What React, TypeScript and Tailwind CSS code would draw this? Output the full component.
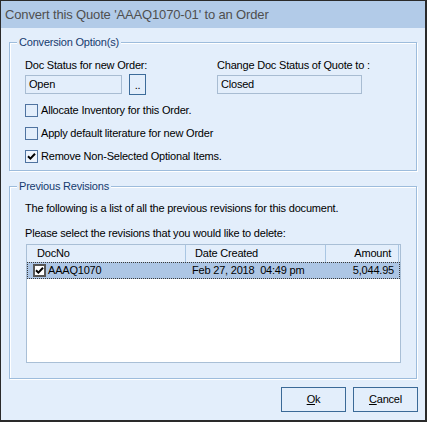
import React from "react";

const bg = "bg-[#e3eefb]";

function Check({ checked, dark }: { checked?: boolean; dark?: boolean }) {
  return (
    <div
      className={`flex h-[13px] w-[13px] shrink-0 items-center justify-center ${
        dark ? "border-2 border-[#555] bg-white" : checked ? "border border-[#4f73a0] bg-[#eef4fd]" : "border border-[#4f73a0]"
      }`}
    >
      {checked && (
        <svg width="9" height="9" viewBox="0 0 9 9">
          <path d="M1 4.2 L3.4 6.6 L8 1.8" fill="none" stroke="#000" strokeWidth="2" />
        </svg>
      )}
    </div>
  );
}

function Group({ title, className, children }: { title: string; className: string; children: React.ReactNode }) {
  return (
    <div className={`relative border border-[#9dbcdc] shadow-[1px_1px_0_#fff,inset_1px_1px_0_#fff] ${className}`}>
      <span className={`absolute -top-[7px] left-[7px] px-[2px] leading-[13px] text-[#163b6e] ${bg}`}>{title}</span>
      {children}
    </div>
  );
}

export default function App() {
  const options = [
    { label: "Allocate Inventory for this Order.", checked: false },
    { label: "Apply default literature for new Order", checked: false },
    { label: "Remove Non-Selected Optional Items.", checked: true },
  ];

  return (
    <div className="flex h-[422px] w-[427px] flex-col border-l border-t border-r-2 border-b-2 border-[#2a2a2a] font-['Liberation_Sans',Arial,sans-serif] text-[11px] tracking-[-0.2px] text-black">
      {/* title bar */}
      <div className="flex h-[27px] shrink-0 items-center bg-[#b2cbe8] pl-[4px] text-[13px] tracking-[-0.15px] text-[#4f4f4f]">
        Convert this Quote 'AAAQ1070-01' to an Order
      </div>

      <div className={`flex flex-1 flex-col px-[8px] pt-[14px] ${bg}`}>
        {/* options */}
        <Group title="Conversion Option(s)" className="h-[129px] shrink-0 pl-[15px] pt-[16px]">
          <div className="flex">
            <div className="w-[192px]">
              <div className="leading-[13px]">Doc Status for new Order:</div>
              <div className="mt-[2px] flex items-center gap-[7px]">
                <div className="flex h-[19px] w-[97px] items-center border border-[#a8bcd2] pl-[3px]">Open</div>
                <button className="flex h-[21px] w-[17px] items-end justify-center border border-[#3d6c9a] pb-[3px] leading-none">..</button>
              </div>
            </div>
            <div>
              <div className="leading-[13px]">Change Doc Status of Quote to :</div>
              <div className="mt-[3px] flex h-[19px] w-[145px] items-center border border-[#a8bcd2] pl-[3px]">Closed</div>
            </div>
          </div>
          <div className="mt-[9px] flex flex-col gap-[10px]">
            {options.map((o) => (
              <div key={o.label} className="flex h-[13px] items-center gap-[3px]">
                <Check checked={o.checked} />
                <span className="leading-[13px]">{o.label}</span>
              </div>
            ))}
          </div>
        </Group>

        {/* revisions */}
        <Group title="Previous Revisions" className="mt-[15px] h-[193px] shrink-0 pt-[15px]">
          <div className="pl-[15px] leading-[13px]">The following is a list of all the previous revisions for this document.</div>
          <div className="mt-[12px] pl-[15px] leading-[13px]">Please select the revisions that you would like to delete:</div>
          <div className="ml-[16px] mr-[15px] mt-[4px] h-[119px] border border-[#a9bfd6] bg-white">
            <div className={`flex h-[17px] items-center ${bg}`}>
              <div className="h-full w-[159px] border-r border-[#a9c6e3] pl-[10px] leading-[17px]">DocNo</div>
              <div className="h-full w-[140px] border-r border-[#a9c6e3] pl-[9px] leading-[17px]">Date Created</div>
              <div className="h-full w-[73px] border-r border-[#a9c6e3] pr-[7px] text-right leading-[17px]">Amount</div>
            </div>
            <div className="flex h-[17px] items-center border border-dotted border-[#3a3a3a] bg-[#adc6e5]">
              <div className="flex w-[158px] items-center pl-[5px]">
                <Check checked dark />
                <span className="ml-[2px]">AAAQ1070</span>
              </div>
              <div className="w-[140px] pl-[6px]">Feb 27, 2018&nbsp; 04:49 pm</div>
              <div className="w-[73px] pr-[5px] text-right">5,044.95</div>
            </div>
          </div>
        </Group>

        {/* buttons */}
        <div className="-mr-[1px] mt-[8px] flex justify-end gap-[7px]">
          <button className="flex h-[25px] w-[65px] items-center justify-center border border-[#3b6a97]">
            <span className="underline">O</span>k
          </button>
          <button className="flex h-[25px] w-[65px] items-center justify-center border border-[#3b6a97]">
            <span className="underline">C</span>ancel
          </button>
        </div>
      </div>
    </div>
  );
}
